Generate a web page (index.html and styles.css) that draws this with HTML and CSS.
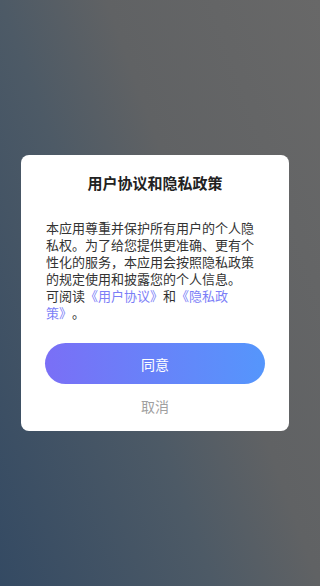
FILE: index.html
```html
<!DOCTYPE html>
<html lang="zh-CN">
<head>
    <meta charset="UTF-8">
    <meta name="viewport" content="width=device-width, initial-scale=1.0">
    <title>用户协议和隐私政策</title>

    <!-- CSS Styles -->
    <link rel="stylesheet" href="styles.css">
</head>
<body>

    <!-- Privacy dialog -->
    <div class="dialog">
        <h1 class="dialog-title">用户协议和隐私政策</h1>

        <p class="dialog-text">
            本应用尊重并保护所有用户的个人隐私权。为了给您提供更准确、更有个性化的服务，本应用会按照隐私政策的规定使用和披露您的个人信息。<br>可阅读<a class="link" href="#">《用户协议》</a>和<a class="link" href="#">《隐私政策》</a>。
        </p>

        <!-- Buttons -->
        <div class="dialog-actions">
            <button class="btn-agree">同意</button>
            <button class="btn-cancel">取消</button>
        </div>
    </div>

</body>
</html>
```

FILE: styles.css
```css
/* Reset styles */
* {
    margin: 0;
    padding: 0;
    box-sizing: border-box;
}

body {
    font-family: 'Noto Sans CJK SC', 'Noto Sans', sans-serif;
    background: linear-gradient(70deg, #344a63 0%, #4d5a66 40%, #606264 60%, #686868 100%);
    color: #333;
    display: flex;
    align-items: center;
    min-height: 100vh;
    overflow: hidden;
    text-spacing-trim: space-all;
}

/* Dialog */
.dialog {
    background-color: #fff;
    border-radius: 8px;
    width: 268px;
    margin-left: 21px;
    padding: 18px 25px 15px;
}

.dialog-title {
    font-size: 15px;
    font-weight: bold;
    line-height: 20px;
    color: #222;
    text-align: center;
    margin-bottom: 26px;
}

.dialog-text {
    font-size: 13px;
    line-height: 17px;
    color: #333;
}

.link {
    color: #7b7ef7;
    text-decoration: none;
}

.dialog-actions {
    display: flex;
    flex-direction: column;
    align-items: center;
    margin-top: 22px;
    gap: 12px;
}

.btn-agree {
    width: 220px;
    height: 41px;
    border: none;
    border-radius: 21px;
    background: linear-gradient(to right, #7a6ff6, #5596fc);
    color: #fff;
    font-family: inherit;
    font-size: 14px;
    cursor: pointer;
}

.btn-cancel {
    background: none;
    border: none;
    color: #a0a0a0;
    font-family: inherit;
    font-size: 14px;
    line-height: 20px;
    cursor: pointer;
}
```
